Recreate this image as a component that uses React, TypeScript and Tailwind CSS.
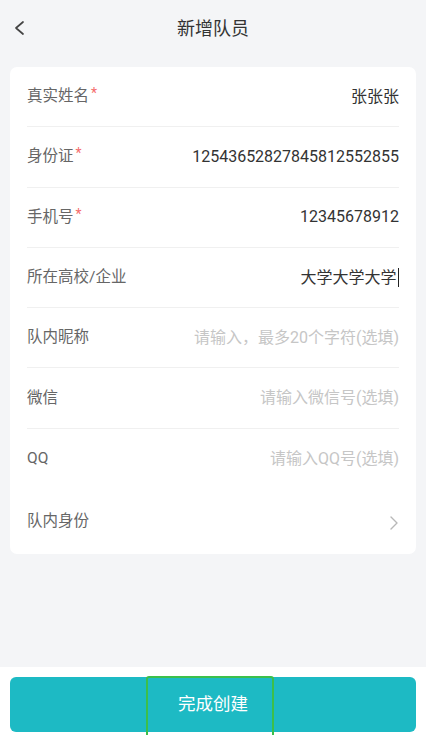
type Row = {
  label: string;
  required?: boolean;
  value?: string;
  placeholder?: string;
  cursor?: boolean;
  arrow?: boolean;
  divider?: boolean;
};

const rows: Row[] = [
  { label: "真实姓名", required: true, value: "张张张", divider: true },
  { label: "身份证", required: true, value: "12543652827845812552855", divider: true },
  { label: "手机号", required: true, value: "12345678912", divider: true },
  { label: "所在高校/企业", value: "大学大学大学", cursor: true, divider: true },
  { label: "队内昵称", placeholder: "请输入，最多20个字符(选填)", divider: true },
  { label: "微信", placeholder: "请输入微信号(选填)", divider: true },
  { label: "QQ", placeholder: "请输入QQ号(选填)" },
  { label: "队内身份", arrow: true },
];

export default function App() {
  return (
    <div
      className="relative flex h-[735px] w-[426px] flex-col overflow-hidden bg-[#f4f5f7]"
      style={{ fontFamily: 'Roboto, "Noto Sans CJK SC", sans-serif' }}
    >
      <div className="relative flex h-[56px] shrink-0 items-center justify-center">
        <svg className="absolute left-[12px] top-[18px]" width="16" height="20" viewBox="0 0 16 20" fill="none">
          <polyline points="11,4 4,10 11,16" stroke="#444" strokeWidth="1.7" strokeLinecap="round" strokeLinejoin="round" />
        </svg>
        <span className="text-[18px] text-[#333]">新增队员</span>
      </div>

      <div className="mx-[10px] mt-[11px] rounded-[7px] bg-white px-[17px]">
        {rows.map((r) => (
          <div
            key={r.label}
            className={
              "flex items-center justify-between " +
              (r.arrow ? "h-[65px] " : "h-[60.3px] ") +
              (r.divider ? "border-b border-[#f0f0f0]" : "")
            }
          >
            <div className="flex items-start text-[15.5px] text-[#666]">
              <span>{r.label}</span>
              {r.required && <span className="ml-[2px] -mt-[2px] text-[14px] text-[#f56c6c]">*</span>}
            </div>
            {r.value && (
              <div className="flex items-center text-[16px] text-[#333]">
                <span>{r.value}</span>
                {r.cursor && <span className="ml-[1px] h-[19px] w-[1.5px] bg-[#222]" />}
              </div>
            )}
            {r.placeholder && <div className="text-[16px] text-[#c6c6c6]">{r.placeholder}</div>}
            {r.arrow && (
              <svg className="-mr-[2px] mt-[3px]" width="14" height="20" viewBox="0 0 14 20" fill="none">
                <polyline points="4,4 10,10 4,16" stroke="#b8b8b8" strokeWidth="1.4" strokeLinecap="round" strokeLinejoin="round" />
              </svg>
            )}
          </div>
        ))}
      </div>

      <div className="flex-1" />

      <div className="h-[68px] shrink-0 bg-white px-[10px] pt-[10px]">
        <button className="flex h-[55px] w-full items-center justify-center rounded-[6px] bg-[#1dbac4] text-[17.5px] text-white">
          完成创建
        </button>
      </div>

      <div className="pointer-events-none absolute left-[146px] top-[676px] h-[70px] w-[128px] rounded-[3px] border-2 border-[#3cbf4a]" />
    </div>
  );
}
